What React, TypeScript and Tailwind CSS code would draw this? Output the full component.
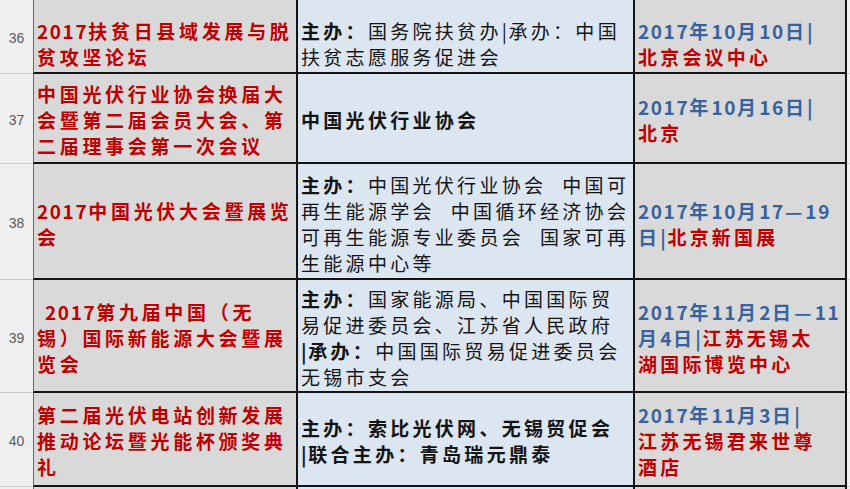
import React from "react";

type Kind = "b" | "n" | "blue" | "red";
type Seg = [Kind, string];

const kindClass: Record<Kind, string> = {
  b: "font-bold text-[#141414]",
  n: "font-normal text-[#141414]",
  blue: "font-bold text-[#36639f]",
  red: "font-bold text-[#c00000]",
};

function Run({ s }: { s: string }) {
  const parts = s.match(/[\x21-\x7e]+| |[^\x20-\x7e]+/g) || [];
  return (
    <>
      {parts.map((p, i) =>
        p === " " ? (
          <span key={i} className="inline-block w-[16px]" />
        ) : /^[\x21-\x7e]+$/.test(p) ? (
          <span key={i} className="tracking-[1.6px]">
            {p}
          </span>
        ) : (
          <span key={i}>{p}</span>
        )
      )}
    </>
  );
}

function Lines({ lines }: { lines: Seg[][] }) {
  return (
    <>
      {lines.map((line, i) => (
        <div key={i} className="whitespace-nowrap leading-[26px]">
          {line.map(([k, t], j) => (
            <span key={j} className={kindClass[k]}>
              <Run s={t} />
            </span>
          ))}
        </div>
      ))}
    </>
  );
}

type RowData = {
  h: string;
  pad: string;
  num: string;
  c2: Seg[][];
  c3: Seg[][];
  c4: Seg[][];
};

const rows: RowData[] = [
  {
    h: "h-[74px]",
    pad: "pt-[15px]",
    num: "36",
    c2: [[["red", "2017扶贫日县域发展与脱"]], [["red", "贫攻坚论坛"]]],
    c3: [
      [
        ["b", "主办："],
        ["n", "国务院扶贫办|承办：中国"],
      ],
      [["n", "扶贫志愿服务促进会"]],
    ],
    c4: [[["blue", "2017年10月10日|"]], [["red", "北京会议中心"]]],
  },
  {
    h: "h-[90px]",
    pad: "pt-[3px]",
    num: "37",
    c2: [
      [["red", "中国光伏行业协会换届大"]],
      [["red", "会暨第二届会员大会、第"]],
      [["red", "二届理事会第一次会议"]],
    ],
    c3: [[["b", "中国光伏行业协会"]]],
    c4: [[["blue", "2017年10月16日|"]], [["red", "北京"]]],
  },
  {
    h: "h-[116px]",
    pad: "pt-[6px]",
    num: "38",
    c2: [[["red", "2017中国光伏大会暨展览"]], [["red", "会"]]],
    c3: [
      [
        ["b", "主办："],
        ["n", "中国光伏行业协会 中国可"],
      ],
      [["n", "再生能源学会 中国循环经济协会"]],
      [["n", "可再生能源专业委员会 国家可再"]],
      [["n", "生能源中心等"]],
    ],
    c4: [
      [["blue", "2017年10月17—19"]],
      [
        ["blue", "日|"],
        ["red", "北京新国展"],
      ],
    ],
  },
  {
    h: "h-[113px]",
    pad: "pt-[5px]",
    num: "39",
    c2: [
      [["red", "\u00a02017第九届中国（无"]],
      [["red", "锡）国际新能源大会暨展"]],
      [["red", "览会"]],
    ],
    c3: [
      [
        ["b", "主办："],
        ["n", "国家能源局、中国国际贸"],
      ],
      [["n", "易促进委员会、江苏省人民政府"]],
      [
        ["b", "|承办："],
        ["n", "中国国际贸易促进委员会"],
      ],
      [["n", "无锡市支会"]],
    ],
    c4: [
      [["blue", "2017年11月2日—11"]],
      [
        ["blue", "月4日|"],
        ["red", "江苏无锡太"],
      ],
      [["red", "湖国际博览中心"]],
    ],
  },
  {
    h: "h-[94px]",
    pad: "pt-[4px]",
    num: "40",
    c2: [
      [["red", "第二届光伏电站创新发展"]],
      [["red", "推动论坛暨光能杯颁奖典"]],
      [["red", "礼"]],
    ],
    c3: [[["b", "主办：索比光伏网、无锡贸促会"]], [["b", "|联合主办：青岛瑞元鼎泰"]]],
    c4: [
      [["blue", "2017年11月3日|"]],
      [["red", "江苏无锡君来世尊"]],
      [["red", "酒店"]],
    ],
  },
];

function Row({ r }: { r: RowData }) {
  return (
    <div className={"flex " + r.h}>
      <div className="w-[33px] shrink-0 bg-[#efefef] border-b border-b-[#cdcdcd] flex items-center justify-center pt-[4px] font-['Liberation_Sans',sans-serif] text-[14px] text-[#5a5a5a]">
        {r.num}
      </div>
      <div className={"w-[263px] shrink-0 bg-[#d9d9d9] border-l border-l-[#6b6b6b] border-b-2 border-b-[#141414] flex flex-col justify-center pl-[3px] text-[19px] tracking-[3.7px] " + r.pad}>
        <Lines lines={r.c2} />
      </div>
      <div className={"w-[337px] shrink-0 bg-[#dce6f1] border-l-2 border-l-[#141414] border-b-2 border-b-[#141414] flex flex-col justify-center pl-[3px] text-[19px] tracking-[3.3px] " + r.pad}>
        <Lines lines={r.c3} />
      </div>
      <div className={"w-[214px] shrink-0 bg-[#d9d9d9] border-l-2 border-l-[#141414] border-r-2 border-r-[#141414] border-b-2 border-b-[#141414] flex flex-col justify-center pl-[3px] text-[19px] tracking-[3.2px] " + r.pad}>
        <Lines lines={r.c4} />
      </div>
      <div className="flex-1 bg-[#f2f2f2] border-b border-b-[#d4d4d4]" />
    </div>
  );
}

export default function App() {
  return (
    <div className="w-[850px] h-[489px] overflow-hidden bg-white font-['Noto_Sans_CJK_SC',sans-serif]">
      {rows.map((r) => (
        <Row key={r.num} r={r} />
      ))}
      <div className="flex h-[20px]">
        <div className="w-[33px] shrink-0 bg-[#efefef]" />
        <div className="w-[263px] shrink-0 bg-[#d9d9d9] border-l border-l-[#6b6b6b]" />
        <div className="w-[337px] shrink-0 bg-[#dce6f1] border-l-2 border-l-[#141414]" />
        <div className="w-[214px] shrink-0 bg-[#d9d9d9] border-l-2 border-l-[#141414] border-r-2 border-r-[#141414]" />
        <div className="flex-1 bg-[#f2f2f2]" />
      </div>
    </div>
  );
}
